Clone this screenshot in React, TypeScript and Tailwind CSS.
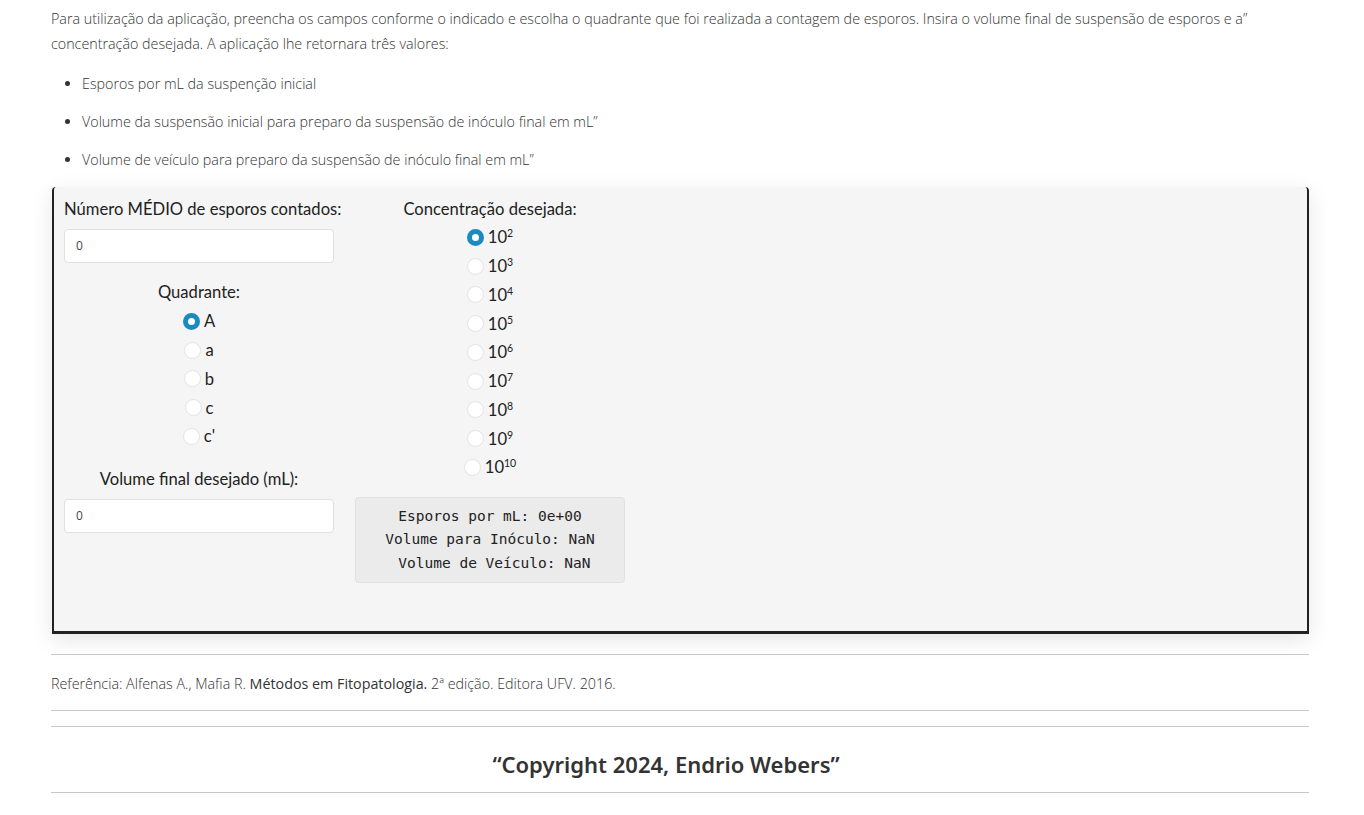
import React from "react";

const body = { fontFamily: '"Open Sans", "Noto Sans", sans-serif' };
const label = { fontFamily: '"Lato", "Noto Sans", sans-serif' };

function Radio({ checked, children }: { checked?: boolean; children: React.ReactNode }) {
  return (
    <div className="h-[28.75px] flex items-center justify-center">
      <span
        className={
          checked
            ? "w-[17px] h-[17px] rounded-full border-[5px] border-[#1a8ac0] bg-white"
            : "w-[17px] h-[17px] rounded-full border border-[#e2e2e2] bg-white"
        }
      />
      <span className="ml-[4px] text-[16.6px] leading-[20px] text-[#222]">{children}</span>
    </div>
  );
}

function Pow({ e }: { e: string }) {
  return (
    <>
      10<sup className="text-[10.5px] relative top-[-6px]">{e}</sup>
    </>
  );
}

export default function App() {
  return (
    <div className="min-h-[815px] bg-white text-[#333] pl-[51px] pr-[55px] pt-[6px]" style={body}>
      <p className="text-[14.3px] font-light leading-[25px]">
        Para utilização da aplicação, preencha os campos conforme o indicado e escolha o quadrante que foi realizada a
        contagem de esporos. Insira o volume final de suspensão de esporos e a”
        <br />
        concentração desejada. A aplicação lhe retornara três valores:
      </p>
      <ul className="mt-[17px] pl-[31px] list-disc text-[14.3px] font-light leading-[22px]">
        <li>Esporos por mL da suspenção inicial</li>
        <li className="mt-[16px]">Volume da suspensão inicial para preparo da suspensão de inóculo final em mL”</li>
        <li className="mt-[16px]">Volume de veículo para preparo da suspensão de inóculo final em mL”</li>
      </ul>

      <div
        className="mt-[16px] ml-[1px] h-[447px] bg-[#f5f5f5] border-x-2 border-b-[3px] border-[#222] rounded-t-[4px] shadow-[0_6px_22px_rgba(0,0,0,0.10)] pl-[10px] pt-[11px] flex gap-[21px]"
        style={label}
      >
        <div className="w-[270px] flex flex-col">
          <div className="text-[16.6px] leading-[22px] text-[#222] whitespace-nowrap">Número MÉDIO de esporos contados:</div>
          <div
            className="mt-[9px] h-[34px] bg-white border border-[#e0e0e0] rounded-[4px] px-[11px] flex items-center text-[12px] text-[#444]"
            style={body}
          >
            0
          </div>
          <div className="mt-[18px] text-[16.6px] leading-[22px] text-center text-[#222] whitespace-nowrap">Quadrante:</div>
          <div className="mt-[4px] flex flex-col">
            <Radio checked>A</Radio>
            <Radio>a</Radio>
            <Radio>b</Radio>
            <Radio>c</Radio>
            <Radio>c'</Radio>
          </div>
          <div className="mt-[17px] text-[16.6px] leading-[22px] text-center text-[#222] whitespace-nowrap">Volume final desejado (mL):</div>
          <div
            className="mt-[9px] h-[34px] bg-white border border-[#e0e0e0] rounded-[4px] px-[11px] flex items-center text-[12px] text-[#444]"
            style={body}
          >
            0
          </div>
        </div>
        <div className="w-[270px] flex flex-col">
          <div className="text-[16.6px] leading-[22px] text-center text-[#222] whitespace-nowrap">Concentração desejada:</div>
          <div className="mt-[3px] flex flex-col">
            <Radio checked><Pow e="2" /></Radio>
            <Radio><Pow e="3" /></Radio>
            <Radio><Pow e="4" /></Radio>
            <Radio><Pow e="5" /></Radio>
            <Radio><Pow e="6" /></Radio>
            <Radio><Pow e="7" /></Radio>
            <Radio><Pow e="8" /></Radio>
            <Radio><Pow e="9" /></Radio>
            <Radio><Pow e="10" /></Radio>
          </div>
          <div
            className="mt-[15px] h-[86px] bg-[#ebebeb] border border-[#e0e0e0] rounded-[4px] flex flex-col items-center justify-center text-[14.5px] leading-[23.5px] text-[#222] whitespace-pre"
            style={{ fontFamily: '"DejaVu Sans Mono", "Liberation Mono", monospace' }}
          >
            <div>Esporos por mL: 0e+00</div>
            <div>Volume para Inóculo: NaN</div>
            <div> Volume de Veículo: NaN</div>
          </div>
        </div>
      </div>

      <hr className="mt-[20px] border-t border-[#c8c8c8]" />
      <p className="mt-[19px] text-[14.3px] font-light leading-[20px]">
        Referência: Alfenas A., Mafia R. <span className="font-normal">Métodos em Fitopatologia.</span> 2ª edição. Editora UFV. 2016.
      </p>
      <hr className="mt-[16px] border-t border-[#c8c8c8]" />
      <hr className="mt-[15px] border-t border-[#c8c8c8]" />
      <div
        className="mt-[22px] pr-[28px] text-center text-[22px] font-semibold leading-[30px] text-[#333]"
        style={{ fontFamily: '"Noto Sans", "Open Sans", sans-serif' }}
      >
        “Copyright 2024, Endrio Webers”
      </div>
      <hr className="mt-[13px] border-t border-[#c8c8c8]" />
    </div>
  );
}
